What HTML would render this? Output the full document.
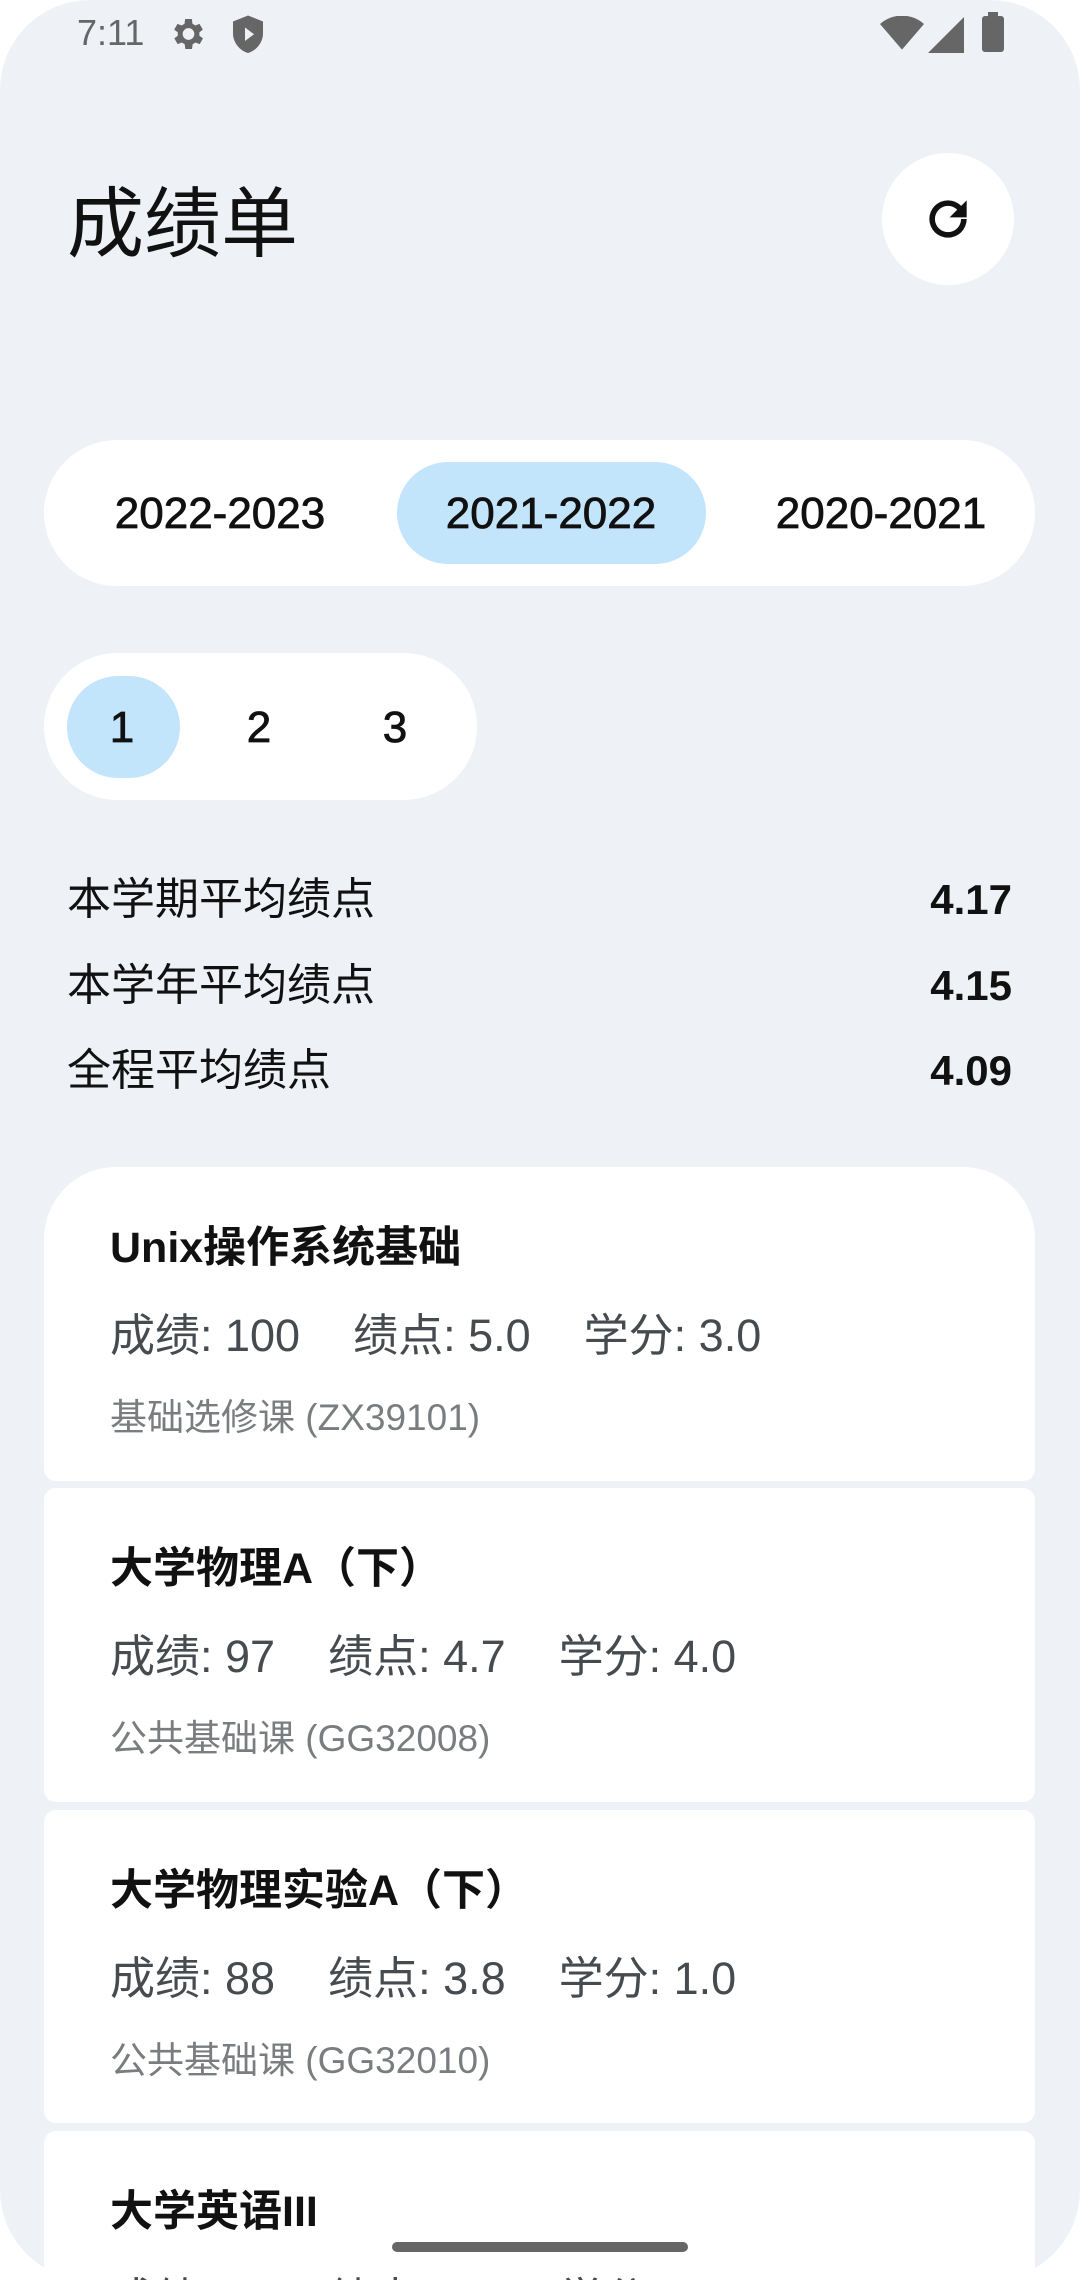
<!DOCTYPE html>
<html><head><meta charset="utf-8"><style>
*{margin:0;padding:0;box-sizing:border-box}
html,body{width:1080px;height:2280px;background:#fff;overflow:hidden}
body{font-family:"Liberation Sans","Noto Sans CJK SC",sans-serif}
.scr{position:absolute;left:0;top:0;width:1080px;height:2280px;background:#eef2f7;border-radius:90px;overflow:hidden}
.abs{position:absolute}
.sb{color:#666;font-size:36px;top:12px;left:77px}
.title{left:67px;top:180px;font-size:77px;color:#111;line-height:90px}
.refresh{left:882px;top:153px;width:132px;height:132px;border-radius:50%;background:#fff}
.seg{background:#fff;border-radius:80px}
.pill{background:#c2e5fb;border-radius:60px}
.lbl{font-size:44px;color:#111;transform:translate(-50%,-50%);white-space:nowrap;-webkit-text-stroke:0.8px #111}
.row{left:67px;width:945px;display:flex;justify-content:space-between;font-size:44px;color:#111;line-height:60px}
.row b{font-weight:700;font-size:42px}
.card{left:44px;width:991px;background:#fff;border-radius:12px}
.card h3{position:absolute;left:66px;top:46px;font-size:43px;font-weight:700;color:#111}
.stats{position:absolute;left:66px;top:132px;font-size:45px;color:#464b50;display:flex;gap:53px}
.sub{position:absolute;left:66px;top:220px;font-size:37px;color:#7a7d80}
</style></head><body><div class="scr">
<div class="abs sb">7:11</div>
<svg class="abs" style="left:167px;top:14px" width="40" height="40" viewBox="0 0 24 24"><path fill="#666" d="M19.4 13a7.5 7.5 0 000-2l2.1-1.6-2-3.5-2.5 1a7 7 0 00-1.7-1L14.9 3h-4l-.4 2.9a7 7 0 00-1.7 1l-2.5-1-2 3.5L6.5 11a7.5 7.5 0 000 2l-2.1 1.6 2 3.5 2.5-1a7 7 0 001.7 1l.4 2.9h4l.4-2.9a7 7 0 001.7-1l2.5 1 2-3.5zM12.9 15.5a3.5 3.5 0 110-7 3.5 3.5 0 010 7z"/></svg>
<svg class="abs" style="left:230px;top:13px" width="36" height="44" viewBox="0 0 24 28"><path fill="#666" d="M12 1L2 5v8c0 6 4.5 11.5 10 13 5.5-1.5 10-7 10-13V5z"/><path fill="#eef2f7" d="M10 9v9l6-4.5z"/></svg>
<svg class="abs" style="left:880px;top:16px" width="44" height="38" viewBox="0 0 24 20"><path fill="#666" d="M12 18L0 4a18 18 0 0124 0z"/></svg>
<svg class="abs" style="left:928px;top:16px" width="36" height="38" viewBox="0 0 20 20"><path fill="#666" d="M20 0v20H0z"/></svg>
<div class="abs" style="left:982px;top:16px;width:22px;height:36px;background:#666;border-radius:3px"></div>
<div class="abs" style="left:988px;top:12px;width:10px;height:6px;background:#666"></div>
<div class="abs title">成绩单</div>
<div class="abs refresh"><svg style="position:absolute;left:38px;top:38px" width="56" height="56" viewBox="0 0 24 24"><path fill="#111" d="M17.65 6.35A7.96 7.96 0 0012 4a8 8 0 108 8h-2.4A5.6 5.6 0 1112 6.4c1.55 0 2.93.64 3.94 1.66L12.7 11.3H20V4z"/></svg></div>
<div class="abs seg" style="left:44px;top:440px;width:991px;height:146px"></div>
<div class="abs pill" style="left:397px;top:462px;width:309px;height:102px"></div>
<div class="abs lbl" style="left:220px;top:514px">2022-2023</div>
<div class="abs lbl" style="left:551px;top:514px">2021-2022</div>
<div class="abs lbl" style="left:881px;top:514px">2020-2021</div>
<div class="abs seg" style="left:44px;top:653px;width:433px;height:147px"></div>
<div class="abs pill" style="left:67px;top:676px;width:113px;height:102px"></div>
<div class="abs lbl" style="left:122px;top:728px">1</div>
<div class="abs lbl" style="left:259px;top:728px">2</div>
<div class="abs lbl" style="left:395px;top:728px">3</div>
<div class="abs row" style="top:870px"><span>本学期平均绩点</span><b>4.17</b></div>
<div class="abs row" style="top:956px"><span>本学年平均绩点</span><b>4.15</b></div>
<div class="abs row" style="top:1041px"><span>全程平均绩点</span><b>4.09</b></div>
<div class="abs card" style="top:1167px;height:314px;border-radius:72px 72px 12px 12px"><h3>Unix操作系统基础</h3><div class="stats"><span>成绩: 100</span><span>绩点: 5.0</span><span>学分: 3.0</span></div><div class="sub">基础选修课 (ZX39101)</div></div>
<div class="abs card" style="top:1488px;height:314px"><h3>大学物理A（下）</h3><div class="stats"><span>成绩: 97</span><span>绩点: 4.7</span><span>学分: 4.0</span></div><div class="sub">公共基础课 (GG32008)</div></div>
<div class="abs card" style="top:1810px;height:313px"><h3>大学物理实验A（下）</h3><div class="stats"><span>成绩: 88</span><span>绩点: 3.8</span><span>学分: 1.0</span></div><div class="sub">公共基础课 (GG32010)</div></div>
<div class="abs card" style="top:2131px;height:149px;overflow:hidden"><h3>大学英语III</h3><div class="stats"><span>成绩: 85</span><span>绩点: 3.5</span><span>学分: 2.0</span></div></div>
<div class="abs" style="left:392px;top:2242px;width:296px;height:10px;border-radius:5px;background:#666"></div>
</div></body></html>
